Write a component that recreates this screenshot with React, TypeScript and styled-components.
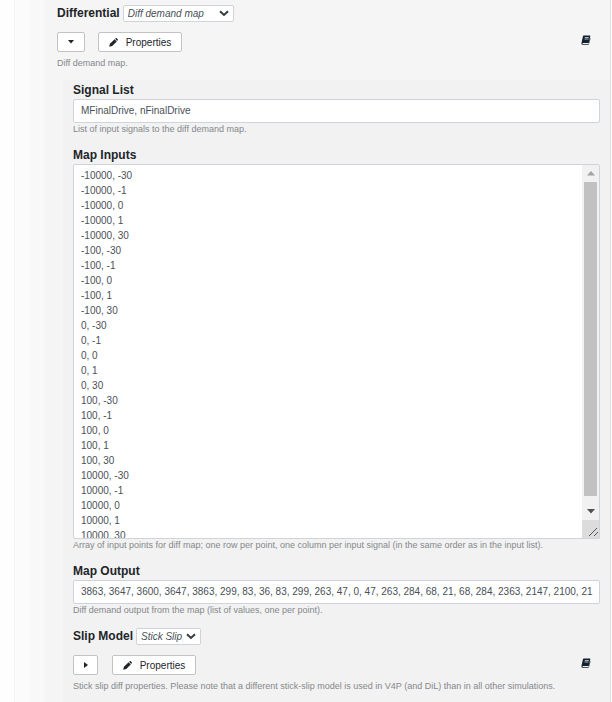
import React from "react";
import styled, { createGlobalStyle } from "styled-components";

const Global = createGlobalStyle`
  * { box-sizing: border-box; }
  body { margin: 0; background: #fff; font-family: "Liberation Sans", Arial, sans-serif; overflow: hidden; }
`;

const Page = styled.div`
  width: 612px;
  height: 702px;
  padding-left: 14px;
  background: #fefefe;
  overflow: hidden;
`;
const Level = styled.div<{ $bg: string; $pad: number }>`
  height: 100%;
  padding-left: ${(p) => p.$pad}px;
  background: ${(p) => p.$bg};
`;
const OuterLevel = styled(Level)`
  border-left: 1px solid #f3f3f3;
  border-right: 1px solid #dedede;
  width: 597px;
`;
const Section = styled.div`
  height: 100%;
  padding: 5px 0 0 12px;
  background: #f5f5f5;
  display: flex;
  flex-direction: column;
`;
const Nested = styled.div`
  flex: 1;
  margin: 10px 0 0 6px;
  padding: 2px 10px 0 10px;
  background: #f2f2f2;
`;
const Heading = styled.div`
  display: flex;
  align-items: center;
  height: 17px;
`;
const Label = styled.label`
  display: block;
  font-size: 12px;
  font-weight: 700;
  line-height: 17px;
  color: #212529;
  white-space: nowrap;
`;
const Select = styled.div<{ $w: number }>`
  display: flex;
  align-items: center;
  justify-content: space-between;
  width: ${(p) => p.$w}px;
  height: 17px;
  margin-left: 3px;
  padding: 0 4px;
  border: 1px solid #ced4da;
  border-radius: 2px;
  background: #fff;
  color: #495057;
  font-size: 10px;
  font-style: italic;
  white-space: nowrap;
`;
const Actions = styled.div`
  display: flex;
  align-items: flex-start;
  height: 20px;
  margin: 10px 0 5px;
`;
const Button = styled.button<{ $w: number }>`
  display: flex;
  align-items: center;
  justify-content: center;
  width: ${(p) => p.$w}px;
  height: 20px;
  padding: 0;
  border: 1px solid #c3c3c3;
  border-radius: 2px;
  background: #fff;
  color: #212529;
  font: 10px "Liberation Sans", Arial, sans-serif;
  gap: 8px;
`;
const Gap = styled.span<{ $w: number }>`
  width: ${(p) => p.$w}px;
`;
const Manual = styled.span<{ $right: number }>`
  display: flex;
  margin: 3px ${(p) => p.$right}px 0 auto;
`;
const Help = styled.div`
  height: 13px;
  font-size: 9px;
  line-height: 13px;
  color: #85888b;
  white-space: nowrap;
`;
const Field = styled.div`
  height: 24px;
  padding: 0 7px;
  border: 1px solid #ced4da;
  border-radius: 2px;
  background: #fff;
  color: #495057;
  font-size: 10px;
  line-height: 22px;
  white-space: nowrap;
`;
const Group = styled.div<{ $h: number }>`
  height: ${(p) => p.$h}px;
`;
const Area = styled.div`
  display: flex;
  justify-content: space-between;
  height: 375px;
  border: 1px solid #ced4da;
  border-radius: 2px 2px 0 2px;
  background: #fff;
  overflow: hidden;
`;
const Lines = styled.div`
  padding: 3px 7px;
  color: #495057;
  font-size: 10px;
  line-height: 15px;
  white-space: pre;
`;
const Scrollbar = styled.div`
  display: flex;
  flex-direction: column;
  align-items: center;
  width: 17px;
  background: #f1f1f1;
`;
const ScrollButton = styled.div`
  display: flex;
  align-items: center;
  justify-content: center;
  height: 17px;
`;
const Track = styled.div`
  flex: 1;
`;
const Thumb = styled.div`
  width: 13px;
  height: 314px;
  background: #c1c1c1;
`;
const Corner = styled.div`
  display: flex;
  align-items: flex-end;
  justify-content: flex-end;
  width: 17px;
  height: 18px;
  background: #dcdcdc;
`;

const Chevron = () => (
  <svg width="10" height="7" viewBox="0 0 10 7">
    <path d="M1 1.3 5 5l4-3.7" fill="none" stroke="#343a40" strokeWidth="2" />
  </svg>
);
const Pencil = () => (
  <svg width="9" height="9" viewBox="0 0 9 9" fill="#212529">
    <path d="M.2 8.8.9 5.7l4.7-4.5 2.2 2.2L3.2 8zM6.1.8 6.7.3q.5-.5 1.1 0l.9.9q.5.5 0 1.1l-.5.6z" />
  </svg>
);
const Book = () => (
  <svg width="10" height="10" viewBox="0 0 10 10">
    <path d="M2.7.5h6q.8 0 .6.8L7.8 7.5q-.1.5-.7.5H2q-.6 0-.5.5t.6.4h5.4l1.7-6q.4.3.3.7L8 9q-.2.8-1 .8H1.8Q.3 9.7.4 8.2L2 1.1Q2.1.5 2.7.5z" fill="#15202e" />
    <path d="M3.8 2.5h4M3.5 4h4" stroke="#d6dbe1" strokeWidth=".8" />
  </svg>
);
const Triangle = ({ dir, color = "#212529", size = 6 }: { dir: "up" | "down" | "right"; color?: string; size?: number }) =>
  dir === "right" ? (
    <svg width="4" height="6" viewBox="0 0 4 6"><path d="M0 0 4 3 0 6z" fill={color} /></svg>
  ) : (
    <svg width={size} height={size / 2 + 0.5} viewBox="0 0 8 4" preserveAspectRatio="none">
      <path d={dir === "down" ? "M0 0h8L4 4z" : "M0 4h8L4 0z"} fill={color} />
    </svg>
  );

const Toolbar = ({ open, right }: { open: boolean; right: number }) => (
  <Actions>
    <Button $w={open ? 28 : 25}><Triangle dir={open ? "down" : "right"} /></Button>
    <Gap $w={open ? 13 : 14} />
    <Button $w={84}><Pencil />Properties</Button>
    <Manual $right={right}><Book /></Manual>
  </Actions>
);

const points = ["-10000", "-100", "0", "100", "10000"]
  .flatMap((a) => ["-30", "-1", "0", "1", "30"].map((b) => `${a}, ${b}`))
  .join("\n");

export default function App() {
  return (
    <>
      <Global />
      <Page>
        <OuterLevel $bg="#fbfbfb" $pad={15}>
          <Level $bg="#f8f8f8" $pad={15}>
            <Section>
              <Heading>
                <Label>Differential</Label>
                <Select $w={111}>Diff demand map<Chevron /></Select>
              </Heading>
              <Toolbar open right={19} />
              <Help>Diff demand map.</Help>
              <Nested>
                <Group $h={65}>
                  <Label>Signal List</Label>
                  <Field>MFinalDrive, nFinalDrive</Field>
                  <Help>List of input signals to the diff demand map.</Help>
                </Group>
                <Group $h={416}>
                  <Label>Map Inputs</Label>
                  <Area>
                    <Lines>{points}</Lines>
                    <Scrollbar>
                      <ScrollButton><Triangle dir="up" color="#a3a3a3" size={8} /></ScrollButton>
                      <Track><Thumb /></Track>
                      <ScrollButton><Triangle dir="down" color="#505050" size={8} /></ScrollButton>
                      <Corner>
                        <svg width="12" height="12" viewBox="0 0 12 12"><path d="M2 10 10 2M7 10l4-4" stroke="#555" /></svg>
                      </Corner>
                    </Scrollbar>
                  </Area>
                  <Help>Array of input points for diff map; one row per point, one column per input signal (in the same order as in the input list).</Help>
                </Group>
                <Group $h={65}>
                  <Label>Map Output</Label>
                  <Field>3863, 3647, 3600, 3647, 3863, 299, 83, 36, 83, 299, 263, 47, 0, 47, 263, 284, 68, 21, 68, 284, 2363, 2147, 2100, 21</Field>
                  <Help>Diff demand output from the map (list of values, one per point).</Help>
                </Group>
                <Heading>
                  <Label>Slip Model</Label>
                  <Select $w={65}>Stick Slip<Chevron /></Select>
                </Heading>
                <Toolbar open={false} right={9} />
                <Help>Stick slip diff properties. Please note that a different stick-slip model is used in V4P (and DiL) than in all other simulations.</Help>
              </Nested>
            </Section>
          </Level>
        </OuterLevel>
      </Page>
    </>
  );
}
